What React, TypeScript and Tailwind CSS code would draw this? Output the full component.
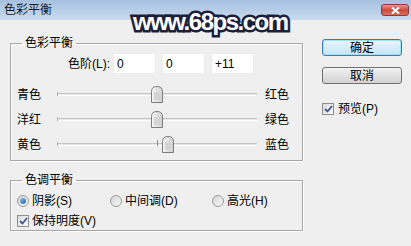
import type { ReactNode } from "react";

const font = "font-['Liberation_Sans','Noto_Sans_CJK_SC',sans-serif]";

type SliderRow = { left: string; right: string; value: number };

const sliders: SliderRow[] = [
  { left: "青色", right: "红色", value: 0 },
  { left: "洋红", right: "绿色", value: 0 },
  { left: "黄色", right: "蓝色", value: 11 },
];

function Thumb() {
  return (
    <svg width="12" height="17" viewBox="0 0 12 17">
      <defs>
        <linearGradient id="thumb-fill" x1="0" y1="0" x2="1" y2="0">
          <stop offset="0" stopColor="#f7f7f7" />
          <stop offset="0.5" stopColor="#e2e2e2" />
          <stop offset="1" stopColor="#cfcfcf" />
        </linearGradient>
      </defs>
      <path
        d="M0.5 16.5 V5.5 Q0.5 0.5 6 0.5 Q11.5 0.5 11.5 5.5 V16.5 Z"
        fill="url(#thumb-fill)"
        stroke="#7d7d7d"
      />
      <rect x="3" y="6" width="6" height="8" fill="#d4d4d4" />
    </svg>
  );
}

function Slider({ value }: { value: number }) {
  return (
    <div className="relative h-[17px] w-[200px]">
      <div className="absolute left-0 right-0 top-[7px] h-[3px] border-t border-[#c4c4c4] border-b border-b-white bg-[#e6e6e6]" />
      <div className="absolute left-0 top-[6px] h-[4px] w-px bg-[#b0b0b0]" />
      <div className="absolute left-[100px] top-[4px] h-[6px] w-px bg-[#8c8c8c]" />
      <div className="absolute top-0" style={{ left: value + 100 - 6 }}>
        <Thumb />
      </div>
    </div>
  );
}

function Checkbox() {
  return (
    <span className="flex h-[12px] w-[12px] items-center justify-center border border-[#8e8f8f] bg-gradient-to-br from-[#dcdcdc] to-[#fbfbfb]">
      <svg width="9" height="8" viewBox="0 0 9 8">
        <path d="M1 4 L3.5 6.5 L8 1" fill="none" stroke="#3c5794" strokeWidth="1.8" />
      </svg>
    </span>
  );
}

function Radio({ checked }: { checked?: boolean }) {
  return (
    <span className="flex h-[12px] w-[12px] items-center justify-center rounded-full border border-[#9a9a9a] bg-gradient-to-br from-[#d6d6d6] to-[#f8f8f8]">
      {checked && (
        <span className="h-[6px] w-[6px] rounded-full bg-gradient-to-br from-[#8fc1ec] to-[#2062a8]" />
      )}
    </span>
  );
}

function Group({ title, children }: { title: string; children: ReactNode }) {
  return (
    <fieldset className="w-[293px] border border-[#a7a7a7] shadow-[inset_1px_1px_0_#ffffff,1px_1px_0_#ffffff]">
      <legend className="ml-[11px] px-[3px] text-[12px] leading-[14px] text-black">{title}</legend>
      {children}
    </fieldset>
  );
}

function Input({ value }: { value: string }) {
  return (
    <div className="flex h-[21px] w-[43px] items-center border border-[#ececec] bg-white pl-[3px] text-[12px] text-black">
      {value}
    </div>
  );
}

export default function App() {
  return (
    <div className={`relative h-[246px] w-[411px] overflow-hidden bg-[#efefef] text-black ${font}`}>
      <div className="flex h-[20px] items-center justify-between bg-gradient-to-b from-[#a6c0df] to-[#c9dbee] pl-[4px] pr-[2px]">
        <span className="text-[12px] leading-none text-[#1a1a1a]">色彩平衡</span>
        <span className="flex h-[12px] w-[28px] items-center justify-center rounded-[3px] border border-[#8e3a3a] bg-gradient-to-b from-[#e3988a] via-[#c84a3e] to-[#d97060]">
          <svg width="9" height="7" viewBox="0 0 9 7">
            <path d="M1 0.5 L8 6.5 M8 0.5 L1 6.5" stroke="#ffffff" strokeWidth="2" />
          </svg>
        </span>
      </div>

      <div className="flex items-start">
        <div className="ml-[10px] mt-[16px] flex flex-col gap-[12px]">
          <Group title="色彩平衡">
            <div className="mt-[3px] flex h-[21px] items-center">
              <span className="w-[102px] pr-[3px] text-right text-[12px]">色阶(L):</span>
              <div className="flex gap-[6px]">
                <Input value="0" />
                <Input value="0" />
                <Input value="+11" />
              </div>
            </div>
            <div className="mt-[8px] mb-[3px] flex flex-col">
              {sliders.map((s) => (
                <div key={s.left} className="flex h-[25px] items-center pl-[6px]">
                  <span className="w-[40px] text-[12px]">{s.left}</span>
                  <Slider value={s.value} />
                  <span className="ml-[8px] text-[12px]">{s.right}</span>
                </div>
              ))}
            </div>
          </Group>

          <Group title="色调平衡">
            <div className="flex flex-col gap-[2px] pl-[6px] pt-[5px]">
              <div className="flex h-[18px] items-center text-[12px]">
                <span className="flex w-[93px] items-center gap-[3px]">
                  <Radio checked />
                  阴影(S)
                </span>
                <span className="flex w-[102px] items-center gap-[3px]">
                  <Radio />
                  中间调(D)
                </span>
                <span className="flex items-center gap-[3px]">
                  <Radio />
                  高光(H)
                </span>
              </div>
              <div className="flex h-[18px] items-center gap-[3px] text-[12px]">
                <Checkbox />
                保持明度(V)
              </div>
            </div>
          </Group>
        </div>

        <div className="ml-[19px] mt-[19px] flex w-[80px] flex-col">
          <button
            type="button"
            className="h-[17px] rounded-[3px] border border-[#3d7bad] bg-gradient-to-b from-[#eaf6fd] to-[#c4e5f6] text-[12px] leading-none shadow-[inset_0_0_0_1px_#9fe0f5]"
          >
            确定
          </button>
          <button
            type="button"
            className="mt-[11px] h-[17px] rounded-[3px] border border-[#707070] bg-gradient-to-b from-[#f2f2f2] to-[#d2d2d2] text-[12px] leading-none"
          >
            取消
          </button>
          <div className="mt-[16px] flex items-center gap-[4px] text-[12px]">
            <Checkbox />
            预览(P)
          </div>
        </div>
      </div>

      <div className="pointer-events-none absolute left-[133px] top-[10px] font-['Liberation_Sans',sans-serif] text-[24px] font-bold leading-none tracking-[-1.5px] text-white [paint-order:stroke_fill] [-webkit-text-stroke:5px_#1c1f3c]">
        www.68ps.com
      </div>
    </div>
  );
}
